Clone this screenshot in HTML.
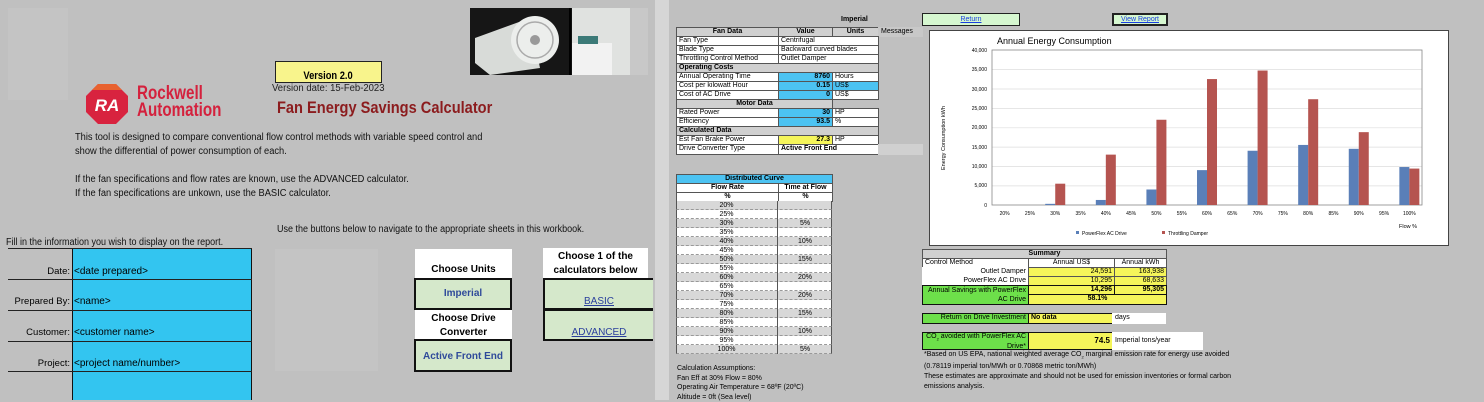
<!DOCTYPE html>
<html><head><meta charset="utf-8"><style>
*{margin:0;padding:0;box-sizing:border-box}
body{width:1484px;height:400px;overflow:hidden;background:#c0c0c0;font-family:"Liberation Sans",Arial,sans-serif;position:relative;color:#000}
.a{position:absolute}
.n{transform:scaleX(0.85);transform-origin:0 0;white-space:nowrap}
.t{font-size:7px;line-height:9px;white-space:nowrap}
.c{position:absolute;border:1px solid #555;font-size:7px;line-height:8px;white-space:nowrap;padding:0 2px;overflow:hidden}
.lnk{color:#2a3f9d;text-decoration:underline}
</style></head><body>
<div class="a" style="left:8px;top:8px;width:60px;height:92px;background:#c4c4c4"></div>
<div class="a" style="left:470px;top:8px;width:178px;height:67px;background:#111;overflow:hidden">
<svg width="178" height="67"><rect x="0" y="0" width="100" height="67" fill="#161616"/><polygon points="5,30 60,10 70,60 20,67 5,55" fill="#d8dbd8"/><circle cx="65" cy="32" r="24" fill="#eceeec"/><circle cx="65" cy="32" r="18" fill="none" stroke="#aaa" stroke-width="1.5"/><circle cx="65" cy="32" r="5" fill="#999"/><rect x="99" y="0" width="2" height="67" fill="#000"/><rect x="102" y="0" width="76" height="67" fill="#e0e2e0"/><rect x="102" y="35" width="40" height="32" fill="#f2f2f2"/><rect x="108" y="28" width="20" height="8" fill="#3c7a78"/><rect x="160" y="0" width="18" height="67" fill="#c8c8c8"/></svg></div>
<div class="a" style="left:275px;top:61px;width:107px;height:22px;background:#f8f48c;border:1px solid #222;font-size:11px;font-weight:bold;text-align:center;line-height:28px"><span style="display:inline-block;transform:scaleX(0.85)">Version 2.0</span></div>
<div class="a n" style="left:272px;top:83px;font-size:10px;color:#222;transform:scaleX(0.95)">Version date: 15-Feb-2023</div>
<svg class="a" style="left:86px;top:84px" width="42" height="40"><polygon points="12,0 30,0 42,12 42,28 30,40 12,40 0,28 0,12" fill="#d8233f"/><polygon points="12,0 30,0 36,6 6,6" fill="#e8622f"/><text x="21" y="27" font-family="Liberation Sans" font-weight="bold" font-size="17" fill="#fff" text-anchor="middle" font-style="italic">RA</text></svg>
<div class="a" style="left:137px;top:85px;font-size:19px;font-weight:bold;color:#d4213d;line-height:17px;transform:scaleX(0.8);transform-origin:0 0">Rockwell<br>Automation</div>
<div class="a" style="left:277px;top:98px;font-size:17px;font-weight:bold;color:#8c1c1e;transform:scaleX(0.86);transform-origin:0 0;white-space:nowrap">Fan Energy Savings Calculator</div>
<div class="a n" style="left:75px;top:131px;font-size:10px;line-height:14px;color:#111;transform:scaleX(0.93)">This tool is designed to compare conventional flow control methods with variable speed control and<br>show the differential of power consumption of each.<br><br>If the fan specifications and flow rates are known, use the ADVANCED calculator.<br>If the fan specifications are unkown, use the BASIC calculator.</div>
<div class="a n" style="left:277px;top:224px;font-size:10px;color:#111;transform:scaleX(0.9)">Use the buttons below to navigate to the appropriate sheets in this workbook.</div>
<div class="a n" style="left:6px;top:237px;font-size:10px;color:#111;transform:scaleX(0.9)">Fill in the information you wish to display on the report.</div>
<div class="a" style="left:8px;top:248px;width:244px;height:152px;border-top:1px solid #222"></div>
<div class="a" style="left:72px;top:249px;width:180px;height:151px;background:#33c5f0;border-left:1px solid #111;border-right:1px solid #111"></div>
<div class="a" style="left:8px;top:279px;width:244px;border-top:1px solid #222"></div>
<div class="a" style="left:8px;top:310px;width:244px;border-top:1px solid #222"></div>
<div class="a" style="left:8px;top:341px;width:244px;border-top:1px solid #222"></div>
<div class="a" style="left:8px;top:371px;width:244px;border-top:1px solid #222"></div>
<div class="a" style="font-size:9.5px;left:8px;width:62px;text-align:right;top:266px">Date:</div>
<div class="a" style="font-size:9.5px;left:8px;width:62px;text-align:right;top:296px">Prepared By:</div>
<div class="a" style="font-size:9.5px;left:8px;width:62px;text-align:right;top:327px">Customer:</div>
<div class="a" style="font-size:9.5px;left:8px;width:62px;text-align:right;top:358px">Project:</div>
<div class="a" style="font-size:10px;left:74px;top:266px">&lt;date prepared&gt;</div>
<div class="a" style="font-size:10px;left:74px;top:296px">&lt;name&gt;</div>
<div class="a" style="font-size:10px;left:74px;top:327px">&lt;customer name&gt;</div>
<div class="a" style="font-size:10px;left:74px;top:358px">&lt;project name/number&gt;</div>
<div class="a" style="left:275px;top:249px;width:103px;height:122px;background:#c4c4c4"></div>
<div class="a" style="left:415px;top:249px;width:97px;height:30px;background:#fff;font-size:10px;font-weight:bold;text-align:center;padding-top:15px">Choose Units</div>
<div class="a" style="left:414px;top:278px;width:98px;height:32px;background:#d5e8cb;border:2px solid #111;font-size:10px;font-weight:bold;color:#2f4a9a;text-align:center;padding-top:8px">Imperial</div>
<div class="a" style="left:415px;top:310px;width:97px;height:30px;background:#fff;font-size:10px;font-weight:bold;text-align:center;line-height:14px;padding-top:2px">Choose Drive<br>Converter</div>
<div class="a" style="left:414px;top:339px;width:98px;height:33px;background:#d5e8cb;border:2px solid #111;font-size:10px;font-weight:bold;color:#2f4a9a;text-align:center;padding-top:10px">Active Front End</div>
<div class="a" style="left:543px;top:248px;width:105px;height:31px;background:#fff;font-size:10px;font-weight:bold;text-align:center;line-height:14px;padding-top:2px">Choose 1 of the<br>calculators below</div>
<div class="a" style="left:543px;top:278px;width:110px;height:32px;background:#d5e8cb;border:2px solid #111;border-right:none;font-size:10px;text-align:center;padding-top:16px"><span class="lnk">BASIC</span></div>
<div class="a" style="left:543px;top:309px;width:110px;height:32px;background:#d5e8cb;border:2px solid #111;border-right:none;font-size:10px;text-align:center;padding-top:16px"><span class="lnk">ADVANCED</span></div>
<div class="a" style="left:655px;top:0;width:14px;height:400px;background:#d6d6d6"></div>
<div class="a t" style="left:841px;top:15px;font-weight:bold">Imperial</div>
<div class="a t" style="left:922px;top:13px;width:98px;height:13px;background:#d6f7d0;border:1px solid #222;text-align:center;line-height:12px"><span style="color:#1a3ee0;text-decoration:underline">Return</span></div>
<div class="a t" style="left:1112px;top:13px;width:56px;height:13px;background:#d6f7d0;border:2px solid #222;text-align:center;line-height:10px"><span style="color:#1a3ee0;text-decoration:underline">View Report</span></div>
<svg class="a" style="left:929px;top:30px" width="520" height="216">
<rect x="0.5" y="0.5" width="519" height="215" fill="#fff" stroke="#444"/>
<text x="68" y="14" font-family="Liberation Sans" font-size="9">Annual Energy Consumption</text>
<g font-family="Liberation Sans" font-size="5" text-anchor="end">
<text x="58" y="22">40,000</text><text x="58" y="41">35,000</text><text x="58" y="61">30,000</text><text x="58" y="80">25,000</text><text x="58" y="99">20,000</text><text x="58" y="119">15,000</text><text x="58" y="138">10,000</text><text x="58" y="157">5,000</text><text x="58" y="177">0</text></g>
<g stroke="#ddd" stroke-width="0.7"><line x1="63" x2="493" y1="39.6" y2="39.6"/><line x1="63" x2="493" y1="59" y2="59"/><line x1="63" x2="493" y1="78.4" y2="78.4"/><line x1="63" x2="493" y1="97.8" y2="97.8"/><line x1="63" x2="493" y1="117.1" y2="117.1"/><line x1="63" x2="493" y1="136.5" y2="136.5"/><line x1="63" x2="493" y1="155.9" y2="155.9"/></g>
<rect x="63" y="20" width="430" height="155" fill="none" stroke="#888" stroke-width="0.8"/>
<text transform="translate(16,140) rotate(-90)" font-family="Liberation Sans" font-size="5.5">Energy Consumption kWh</text>
<g id="bars"></g>
<g font-family="Liberation Sans" font-size="5" text-anchor="middle" id="xl"></g>
<text x="470" y="198" font-family="Liberation Sans" font-size="5.5">Flow %</text>
<rect x="147" y="201" width="3" height="3" fill="#5a7fb8"/><text x="153" y="205" font-family="Liberation Sans" font-size="5">PowerFlex AC Drive</text>
<rect x="233" y="201" width="3" height="3" fill="#b55450"/><text x="239" y="205" font-family="Liberation Sans" font-size="5">Throttling Damper</text>
</svg>
<div class="c" style="left:922px;top:249px;width:245px;height:10px;background:#d0d0d0;text-align:center;font-weight:bold">Summary</div>
<div class="c" style="left:922px;top:258px;width:107px;height:10px;background:#fff">Control Method</div>
<div class="c" style="left:1028px;top:258px;width:87px;height:10px;background:#fff;text-align:center">Annual US$</div>
<div class="c" style="left:1114px;top:258px;width:53px;height:10px;background:#fff;text-align:center">Annual kWh</div>
<div class="c" style="left:922px;top:267px;width:107px;height:10px;background:#fff;text-align:right;border-color:#fff">Outlet Damper</div>
<div class="c" style="left:1028px;top:267px;width:87px;height:10px;background:#f5f55a;text-align:right">24,591</div>
<div class="c" style="left:1114px;top:267px;width:53px;height:10px;background:#f5f55a;text-align:right">163,938</div>
<div class="c" style="left:922px;top:276px;width:107px;height:10px;background:#fff;text-align:right;border-color:#fff">PowerFlex AC Drive</div>
<div class="c" style="left:1028px;top:276px;width:87px;height:10px;background:#f5f55a;text-align:right">10,295</div>
<div class="c" style="left:1114px;top:276px;width:53px;height:10px;background:#f5f55a;text-align:right">68,633</div>
<div class="c" style="left:922px;top:285px;width:107px;height:20px;background:#6de04a;text-align:right;border:1px solid #111;line-height:9px">Annual Savings with PowerFlex<br>AC Drive</div>
<div class="c" style="left:1028px;top:285px;width:87px;height:10px;background:#f5f55a;text-align:right;font-weight:bold;border-color:#111">14,296</div>
<div class="c" style="left:1114px;top:285px;width:53px;height:10px;background:#f5f55a;text-align:right;font-weight:bold;border-color:#111">95,305</div>
<div class="c" style="left:1028px;top:294px;width:139px;height:11px;background:#f5f55a;text-align:center;font-weight:bold;border-color:#111">58.1%</div>
<div class="c" style="left:922px;top:313px;width:107px;height:11px;background:#6de04a;text-align:right;border-color:#111">Return on Drive Investment</div>
<div class="c" style="left:1028px;top:313px;width:85px;height:11px;background:#f5f55a;font-weight:bold;border-color:#111">No data</div>
<div class="c" style="left:1112px;top:313px;width:54px;height:11px;background:#fff;border-color:#fff">days</div>
<div class="c" style="left:922px;top:332px;width:107px;height:18px;background:#6de04a;text-align:right;border-color:#111;line-height:8px">CO<sub style="font-size:4px">2</sub> avoided with PowerFlex AC<br>Drive*</div>
<div class="c" style="left:1028px;top:332px;width:85px;height:18px;background:#f5f55a;text-align:right;font-weight:bold;border-color:#111;font-size:8px;line-height:16px">74.5</div>
<div class="c" style="left:1112px;top:332px;width:91px;height:18px;background:#fff;border-color:#fff;line-height:16px">Imperial tons/year</div>
<div class="a t" style="left:924px;top:350px;line-height:10px">*Based on US EPA, national weighted average CO<sub style="font-size:4px">2</sub> marginal emission rate for energy use avoided<br>(0.78119 imperial ton/MWh or 0.70868 metric ton/MWh)<br>These estimates are approximate and should not be used for emission inventories or formal carbon<br>emissions analysis.</div>
<div class="a t" style="left:677px;top:364px;line-height:9.5px">Calculation Assumptions:<br>Fan Eff at 30% Flow = 80%<br>Operating Air Temperature = 68ºF (20ºC)<br>Altitude = 0ft (Sea level)</div>
<div id="dc"></div>
<script>
var H='';function c(l,t,w,h,bg,txt,st){H+='<div class="c" style="left:'+l+'px;top:'+t+'px;width:'+w+'px;height:'+h+'px;background:'+bg+';'+(st||'')+'">'+txt+'</div>';}
var r=[['Fan Data','Value','Units',1],['Fan Type','Centrifugal',''],['Blade Type','Backward curved blades',''],['Throttling Control Method','Outlet Damper',''],['Operating Costs',0,0,2],['Annual Operating Time','8760','Hours','b'],['Cost per kilowatt Hour','0.15','US$','b'],['Cost of AC Drive','0','US$','b'],['Motor Data',0,0,3],['Rated Power','30','HP','b'],['Efficiency','93.5','%','b'],['Calculated Data',0,0,2],['Est Fan Brake Power','27.3','HP','y'],['Drive Converter Type','<b>Active Front End</b>','','d']];
var y=27;r.forEach(function(q){var h=(q[3]=='d')?11:10;
if(q[3]===1){c(676,y,103,h,'#d0d0d0','<b>Fan Data</b>','text-align:center');c(778,y,55,h,'#d0d0d0','<b>Value</b>','text-align:center');c(832,y,47,h,'#d0d0d0','<b>Units</b>','text-align:center');c(878,y,45,h,'#c8c8c8','Messages','border-color:#c8c8c8');}
else if(q[3]==2){c(676,y,203,h,'#d0d0d0','<b>'+q[0]+'</b>');}
else if(q[3]==3){c(676,y,157,h,'#d0d0d0','<b>'+q[0]+'</b>','text-align:center');}
else{c(676,y,103,h,'#fff',q[0]);var bg=q[3]=='b'?'#4cc3f2':q[3]=='y'?'#f5f55a':'#fff';
if(q[3]=='d'){c(778,y,101,h,'#fff',q[1]);c(878,y,45,h,'#d0d0d0','','border-color:#d0d0d0');}
else if(q[2]===''&&!q[3]){c(778,y,101,h,'#fff',q[1]);}
else{c(778,y,55,h,bg,'<b>'+q[1]+'</b>','text-align:right');c(832,y,47,h,q[0].indexOf('Cost per')==0?'#4cc3f2':'#fff',q[2]);}}
y+=h-1;});
c(676,174,157,10,'#4cc3f2','<b>Distributed Curve</b>','text-align:center');
c(676,183,103,10,'#fff','<b>Flow Rate</b>','text-align:center');c(778,183,55,10,'#fff','<b>Time at Flow</b>','text-align:center');
c(676,192,103,10,'#fff','<b>%</b>','text-align:center');c(778,192,55,10,'#fff','<b>%</b>','text-align:center');
var tf={30:'5%',40:'10%',50:'15%',60:'20%',70:'20%',80:'15%',90:'10%',100:'5%'};
for(var i=0;i<17;i++){var p=20+5*i,yy=201+i*9,bg=i%2?'#fff':'#d8d8d8';
H+='<div class="a t" style="left:676px;top:'+yy+'px;width:156px;height:9px;background:'+bg+';border-bottom:1px dashed #999;border-left:1px solid #555;border-right:1px solid #555"></div>';
H+='<div class="a t" style="left:676px;top:'+(yy)+'px;width:102px;text-align:center;border-right:1px solid #555;height:9px">'+p+'%</div>';
H+='<div class="a t" style="left:778px;top:'+(yy)+'px;width:54px;text-align:center">'+(tf[p]||'')+'</div>';}
document.getElementById('dc').outerHTML=H;
var bl=[0,0,300,0,1300,0,4000,0,9000,0,14000,0,15500,0,14500,0,9800],rd=[0,0,5500,0,13000,0,22000,0,32500,0,34700,0,27300,0,18800,0,9400];
var s='',x='',k=155/40000,w=430/17;
for(var i=0;i<17;i++){var x0=63+i*w;
if(bl[i])s+='<rect x="'+(x0+w/2-10)+'" y="'+(175-bl[i]*k)+'" width="10" height="'+bl[i]*k+'" fill="#5a7fb8"/>';
if(rd[i])s+='<rect x="'+(x0+w/2)+'" y="'+(175-rd[i]*k)+'" width="10" height="'+rd[i]*k+'" fill="#b55450"/>';
x+='<text x="'+(x0+w/2)+'" y="185">'+(20+5*i)+'%</text>';}
document.getElementById('bars').innerHTML=s;document.getElementById('xl').innerHTML=x;
</script>
</body></html>
